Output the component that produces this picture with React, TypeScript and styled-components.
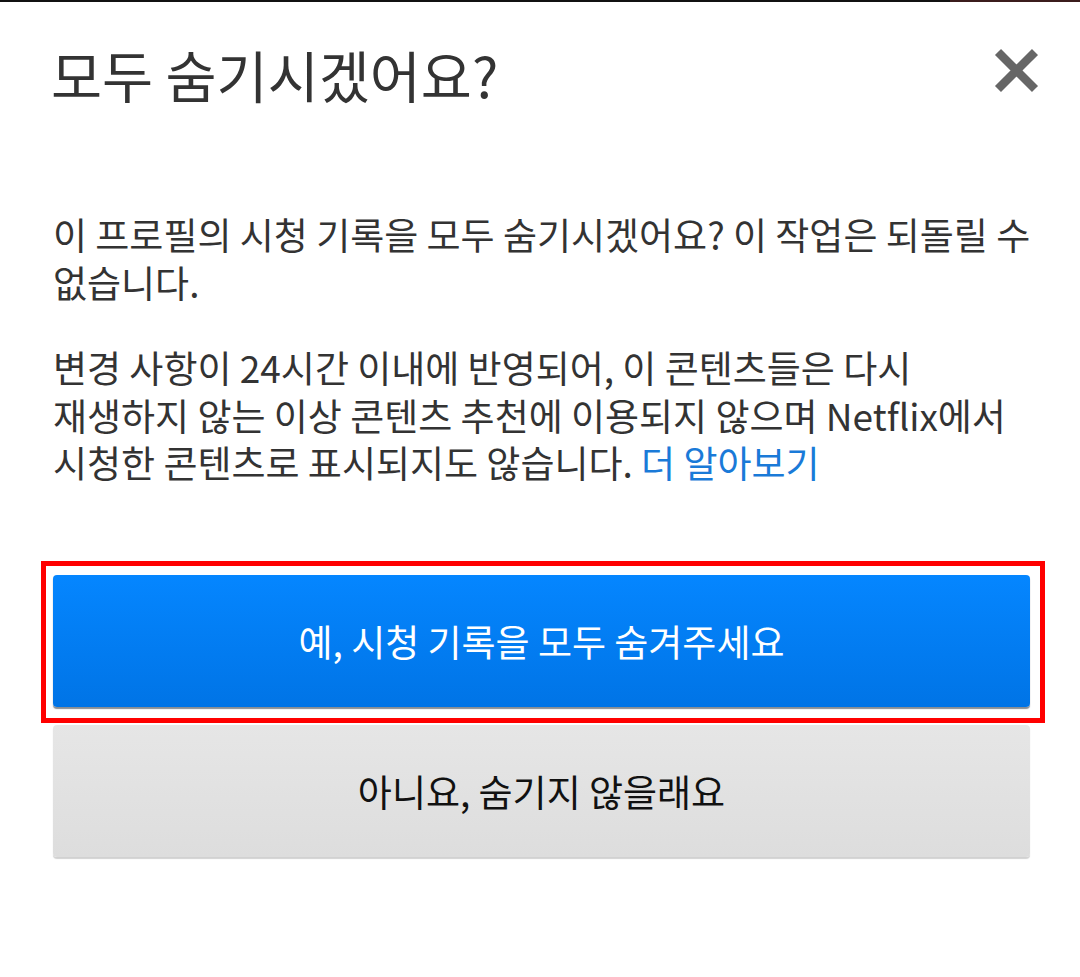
import styled, { createGlobalStyle } from 'styled-components';

const GlobalStyle = createGlobalStyle`
  html, body {
    margin: 0;
    padding: 0;
    background: #fff;
  }
  body {
    font-family: 'Noto Sans CJK KR', 'Noto Sans', sans-serif;
    -webkit-font-smoothing: antialiased;
    word-break: keep-all;
  }
`;

const Screen = styled.div`
  width: 1080px;
  height: 977px;
  background: #fff;
  overflow: hidden;
  display: flex;
  flex-direction: column;
`;

const StatusEdge = styled.div`
  height: 2px;
  background: linear-gradient(to right, #111 0 88%, #3b1c1c 88% 100%);
`;

const Header = styled.div`
  display: flex;
  justify-content: space-between;
  align-items: flex-start;
  padding: 42px 41px 0 51px;
`;

const Title = styled.h1`
  margin: 0;
  font-size: 55.5px;
  line-height: 60px;
  font-weight: 400;
  color: #333;
`;

const CloseButton = styled.button`
  width: 45px;
  height: 45px;
  margin-top: 4px;
  padding: 0;
  border: none;
  background: none;
  cursor: pointer;
  display: flex;
  align-items: center;
  justify-content: center;
`;

const Body = styled.div`
  padding: 107px 38px 0 53px;
`;

const Paragraph = styled.p`
  margin: 0 0 38px;
  font-size: 37px;
  line-height: 47.5px;
  color: #333;

  &:last-child {
    margin-bottom: 0;
  }
`;

const Link = styled.a`
  color: #1a7ad8;
  text-decoration: none;
`;

const Actions = styled.div`
  display: flex;
  flex-direction: column;
  gap: 18px;
  padding: 88px 0 0 53px;
`;

const Highlighted = styled.div`
  position: relative;
  width: 977px;
`;

const HighlightFrame = styled.div`
  position: absolute;
  top: -14px;
  left: -12px;
  right: -15px;
  bottom: -16px;
  border: 5px solid #ff0000;
  pointer-events: none;
`;

const ActionButton = styled.button<{ $primary?: boolean }>`
  display: block;
  width: 977px;
  height: 132px;
  border: none;
  border-radius: 4px;
  font-family: 'Noto Sans CJK KR', 'Noto Sans', sans-serif;
  font-size: 37px;
  font-weight: 400;
  cursor: pointer;
  color: ${(p) => (p.$primary ? '#fff' : '#111')};
  background: ${(p) =>
    p.$primary
      ? 'linear-gradient(to bottom, #0586ff, #0074e6)'
      : 'linear-gradient(to bottom, #e6e6e6, #dddddd)'};
  box-shadow: ${(p) =>
    p.$primary ? '0 2px 1px rgba(40, 50, 60, 0.55)' : '0 2px 1px rgba(0, 0, 0, 0.18)'};
`;

const CloseIcon = () => (
  <svg width="45" height="45" viewBox="0 0 45 45">
    <path d="M4 4 L41 41 M41 4 L4 41" stroke="#666" strokeWidth="8.5" strokeLinecap="butt" />
  </svg>
);

export default function App() {
  return (
    <>
      <GlobalStyle />
      <Screen>
        <StatusEdge />
        <Header>
          <Title>모두 숨기시겠어요?</Title>
          <CloseButton aria-label="닫기">
            <CloseIcon />
          </CloseButton>
        </Header>
        <Body>
          <Paragraph>
            이 프로필의 시청 기록을 모두 숨기시겠어요? 이 작업은 되돌릴 수 없습니다.
          </Paragraph>
          <Paragraph>
            변경 사항이 24시간 이내에 반영되어, 이 콘텐츠들은 다시 재생하지 않는 이상 콘텐츠 추천에
            이용되지 않으며 Netflix에서 시청한 콘텐츠로 표시되지도 않습니다.{' '}
            <Link href="#">더 알아보기</Link>
          </Paragraph>
        </Body>
        <Actions>
          <Highlighted>
            <ActionButton $primary>예, 시청 기록을 모두 숨겨주세요</ActionButton>
            <HighlightFrame />
          </Highlighted>
          <ActionButton>아니요, 숨기지 않을래요</ActionButton>
        </Actions>
      </Screen>
    </>
  );
}
